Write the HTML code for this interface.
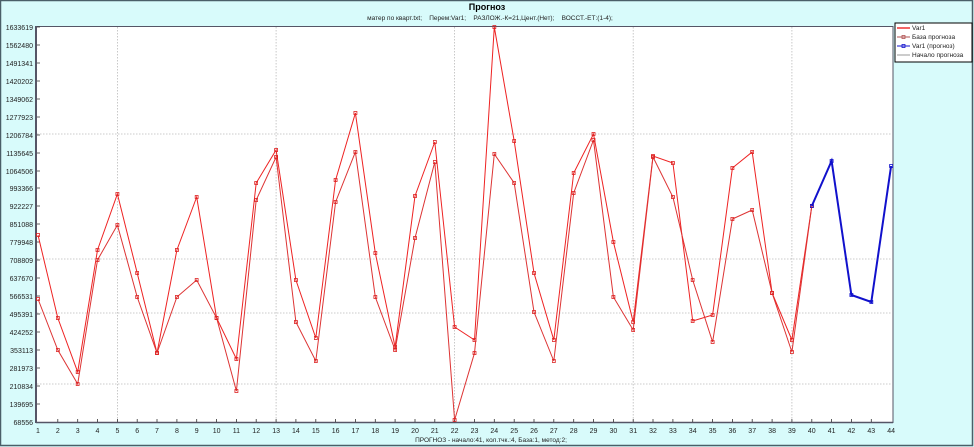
<!DOCTYPE html>
<html><head><meta charset="utf-8"><style>
html,body{margin:0;padding:0;background:#d8fbfb;}
svg{display:block;font-family:"Liberation Sans",sans-serif;}
</style></head><body>
<svg width="974" height="447" viewBox="0 0 974 447" xmlns="http://www.w3.org/2000/svg">
<defs>
<marker id="mr" markerWidth="4" markerHeight="4" refX="2" refY="2" markerUnits="userSpaceOnUse"><rect x="0.5" y="0.5" width="3" height="3" fill="none" stroke="#dd2222" stroke-width="0.8"/></marker>
<marker id="mb" markerWidth="4" markerHeight="4" refX="2" refY="2" markerUnits="userSpaceOnUse"><rect x="0.5" y="0.5" width="3" height="3" fill="none" stroke="#1111cc" stroke-width="0.8"/></marker>
</defs>
<rect x="0" y="0" width="974" height="447" fill="#d8fbfb"/>
<rect x="0.5" y="0.5" width="972" height="445" fill="none" stroke="#4a5f68" stroke-width="1.5"/>
<text x="487" y="10" font-size="9" font-weight="bold" text-anchor="middle" fill="#000">Прогноз</text>
<text x="490" y="20" font-size="6.5" text-anchor="middle" fill="#222" xml:space="preserve">матер по кварт.txt;    Перем:Var1;    РАЗЛОЖ.-К=21,Цент.(Нет);    ВОССТ.-ЕТ:(1-4);</text>
<rect x="36" y="26" width="857" height="396" fill="#fff"/>
<g stroke="#bbb" stroke-width="0.8" stroke-dasharray="1.5,1.5">
<line x1="37" y1="134" x2="892" y2="134"/><line x1="37" y1="259" x2="892" y2="259"/>
<line x1="37" y1="313" x2="892" y2="313"/><line x1="37" y1="384" x2="892" y2="384"/>
<line x1="117.4" y1="27" x2="117.4" y2="421"/><line x1="276.1" y1="27" x2="276.1" y2="421"/>
<line x1="454.6" y1="27" x2="454.6" y2="421"/><line x1="633.2" y1="27" x2="633.2" y2="421"/>
<line x1="791.9" y1="27" x2="791.9" y2="421"/>
</g>
<line x1="36" y1="26" x2="36" y2="423" stroke="#556" stroke-width="2"/>
<line x1="36" y1="422.5" x2="893" y2="422.5" stroke="#556" stroke-width="1.5"/>
<line x1="893" y1="26" x2="893" y2="423" stroke="#556" stroke-width="1"/>
<line x1="36" y1="26.5" x2="893" y2="26.5" stroke="#556" stroke-width="1"/>
<path stroke="#333" stroke-width="0.8" d="M37 27h3M37 45h3M37 63h3M37 81h3M37 99h3M37 117h3M37 135h3M37 153h3M37 171h3M37 188h3M37 206h3M37 224h3M37 242h3M37 260h3M37 278h3M37 296h3M37 314h3M37 332h3M37 350h3M37 368h3M37 386h3M37 404h3M57.8 422v-3M77.7 422v-3M97.5 422v-3M117.4 422v-3M137.2 422v-3M157 422v-3M176.9 422v-3M196.7 422v-3M216.6 422v-3M236.4 422v-3M256.2 422v-3M276.1 422v-3M295.9 422v-3M315.8 422v-3M335.6 422v-3M355.4 422v-3M375.3 422v-3M395.1 422v-3M415 422v-3M434.8 422v-3M454.6 422v-3M474.5 422v-3M494.3 422v-3M514.2 422v-3M534 422v-3M553.8 422v-3M573.7 422v-3M593.5 422v-3M613.4 422v-3M633.2 422v-3M653 422v-3M672.9 422v-3M692.7 422v-3M712.6 422v-3M732.4 422v-3M752.2 422v-3M772.1 422v-3M791.9 422v-3M811.8 422v-3M831.6 422v-3M851.4 422v-3M871.3 422v-3"/>
<g font-size="7" fill="#222" text-anchor="end">
<text x="33" y="30">1633619</text><text x="33" y="48">1562480</text><text x="33" y="66">1491341</text><text x="33" y="84">1420202</text><text x="33" y="102">1349062</text><text x="33" y="120">1277923</text><text x="33" y="138">1206784</text><text x="33" y="156">1135645</text><text x="33" y="174">1064506</text><text x="33" y="191">993366</text><text x="33" y="209">922227</text><text x="33" y="227">851088</text><text x="33" y="245">779948</text><text x="33" y="263">708809</text><text x="33" y="281">637670</text><text x="33" y="299">566531</text><text x="33" y="317">495391</text><text x="33" y="335">424252</text><text x="33" y="353">353113</text><text x="33" y="371">281973</text><text x="33" y="389">210834</text><text x="33" y="407">139695</text><text x="33" y="425">68556</text>
</g>
<g font-size="7" fill="#222" text-anchor="middle">
<text x="38" y="433">1</text><text x="57.8" y="433">2</text><text x="77.7" y="433">3</text><text x="97.5" y="433">4</text><text x="117.4" y="433">5</text><text x="137.2" y="433">6</text><text x="157" y="433">7</text><text x="176.9" y="433">8</text><text x="196.7" y="433">9</text><text x="216.6" y="433">10</text><text x="236.4" y="433">11</text><text x="256.2" y="433">12</text><text x="276.1" y="433">13</text><text x="295.9" y="433">14</text><text x="315.8" y="433">15</text><text x="335.6" y="433">16</text><text x="355.4" y="433">17</text><text x="375.3" y="433">18</text><text x="395.1" y="433">19</text><text x="415" y="433">20</text><text x="434.8" y="433">21</text><text x="454.6" y="433">22</text><text x="474.5" y="433">23</text><text x="494.3" y="433">24</text><text x="514.2" y="433">25</text><text x="534" y="433">26</text><text x="553.8" y="433">27</text><text x="573.7" y="433">28</text><text x="593.5" y="433">29</text><text x="613.4" y="433">30</text><text x="633.2" y="433">31</text><text x="653" y="433">32</text><text x="672.9" y="433">33</text><text x="692.7" y="433">34</text><text x="712.6" y="433">35</text><text x="732.4" y="433">36</text><text x="752.2" y="433">37</text><text x="772.1" y="433">38</text><text x="791.9" y="433">39</text><text x="811.8" y="433">40</text><text x="831.6" y="433">41</text><text x="851.4" y="433">42</text><text x="871.3" y="433">43</text><text x="891.1" y="433">44</text>
</g>
<text x="491" y="442" font-size="6.5" text-anchor="middle" fill="#222">ПРОГНОЗ - начало:41, кол.тчк.:4, База:1, метод:2;</text>
<polyline fill="none" stroke="#ee2222" stroke-width="1" marker-start="url(#mr)" marker-mid="url(#mr)" marker-end="url(#mr)" points="38,235 57.8,318 77.7,372 97.5,250 117.4,194 137.2,273 157,353 176.9,250 196.7,197 216.6,318 236.4,359 256.2,183 276.1,150 295.9,280 315.8,338 335.6,180 355.4,113 375.3,253 395.1,347 415,196 434.8,142 454.6,327 474.5,340 494.3,27 514.2,141 534,273 553.8,340 573.7,173 593.5,134 613.4,242 633.2,322 653,156 672.9,163 692.7,321 712.6,315 732.4,168 752.2,152 772.1,293 791.9,340 811.8,206"/>
<polyline fill="none" stroke="#dd3333" stroke-width="1" marker-start="url(#mr)" marker-mid="url(#mr)" marker-end="url(#mr)" points="38,299 57.8,350 77.7,384 97.5,260 117.4,225 137.2,297 157,353 176.9,297 196.7,280 216.6,318 236.4,391 256.2,200 276.1,157 295.9,322 315.8,361 335.6,202 355.4,152 375.3,297 395.1,350 415,238 434.8,162 454.6,420 474.5,353 494.3,154 514.2,183 534,312 553.8,361 573.7,193 593.5,140 613.4,297 633.2,330 653,157 672.9,197 692.7,280 712.6,342 732.4,219 752.2,210 772.1,293 791.9,352 811.8,206"/>
<polyline fill="none" stroke="#1111cc" stroke-width="2" marker-start="url(#mb)" marker-mid="url(#mb)" marker-end="url(#mb)" points="811.8,206 831.6,161 851.4,295 871.3,302 891.1,166"/>
<rect x="895" y="23" width="77" height="39" fill="#fff" stroke="#000" stroke-width="1"/>
<line x1="897" y1="28" x2="910" y2="28" stroke="#ee3333" stroke-width="1.5"/>
<line x1="897" y1="37" x2="910" y2="37" stroke="#b05050" stroke-width="1"/>
<rect x="902" y="35.5" width="3" height="3" fill="none" stroke="#b05050" stroke-width="0.8"/>
<line x1="897" y1="46" x2="910" y2="46" stroke="#1111cc" stroke-width="1"/>
<rect x="902" y="44.5" width="3" height="3" fill="none" stroke="#1111cc" stroke-width="0.8"/>
<line x1="897" y1="55" x2="910" y2="55" stroke="#bbb" stroke-width="1.5"/>
<g font-size="6.5" fill="#222">
<text x="912" y="30">Var1</text><text x="912" y="39">База прогноза</text><text x="912" y="48">Var1 (прогноз)</text><text x="912" y="57">Начало прогноза</text>
</g>
</svg>
</body></html>
